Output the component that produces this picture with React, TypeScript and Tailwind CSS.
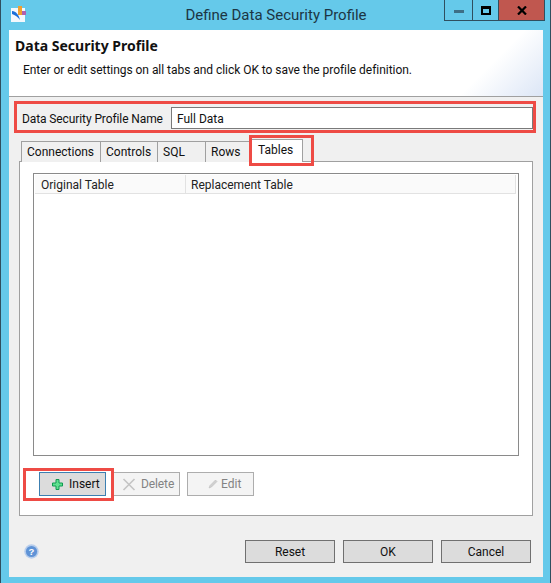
import React from "react";

function Tab({ label, w }: { label: string; w: string }) {
  return (
    <div className={`${w} justify-start pl-[5px] h-[21px] flex items-center bg-[#f0f0f0] border border-b-0 border-[#a0a0a0] text-[12px] text-[#111] -mr-px`}>
      {label}
    </div>
  );
}

function Btn({ label, w = "w-[90px]" }: { label: string; w?: string }) {
  return (
    <div className={`${w} h-[23px] flex items-center justify-center pt-[1px] bg-[#dcdcdc] border border-[#707070] text-[12px] text-[#111]`}>
      {label}
    </div>
  );
}

export default function App() {
  return (
    <div className="relative w-[551px] h-[583px] overflow-hidden bg-[#65c9ea] border-x border-[#2f4f5f] font-['Roboto','Noto_Sans',sans-serif] flex flex-col">
      {/* Title bar */}
      <div className="relative h-[30px] shrink-0 flex items-center justify-center">
        <svg className="absolute left-[10px] top-[6px]" width="16" height="16" viewBox="0 0 16 16">
          <rect x="0" y="2" width="14" height="14" fill="#f4f8fc" />
          <rect x="7" y="0" width="4" height="9" fill="#f0a030" />
          <rect x="11" y="5" width="4" height="4" fill="#b060b0" />
          <path d="M1 5 C5 5 8 9 9 14 C7 11 4 9 1 8 Z" fill="#1a6fd8" />
        </svg>
        <span className="text-[15px] text-[#1c3644] pl-[1px]">Define Data Security Profile</span>
        <div className="absolute right-[5px] top-0 h-[21px] flex border-x border-b border-[#2f4f5f]">
          <div className="w-[28px] flex items-center justify-center border-r border-[#2f4f5f]">
            <div className="w-[10px] h-[3px] bg-[#3d6f86] mt-[3px]" />
          </div>
          <div className="w-[26px] flex items-center justify-center border-r border-[#2f4f5f]">
            <div className="w-[10px] h-[9px] border-2 border-t-[3px] border-black" />
          </div>
          <div className="w-[45px] bg-[#c0574f] flex items-center justify-center">
            <svg width="10" height="9" viewBox="0 0 10 9">
              <path d="M1 0.5 L9 8.5 M9 0.5 L1 8.5" stroke="#000" strokeWidth="2.2" />
            </svg>
          </div>
        </div>
      </div>

      {/* Client area */}
      <div className="ml-[8px] mr-[7px] mb-[6px] flex-1 bg-[#f0f0f0] flex flex-col min-h-0">
        {/* Header */}
        <div className="h-[67px] shrink-0 border-b border-[#a0a0a0] bg-[linear-gradient(135deg,#ffffff_0%,#ffffff_86%,#dce6f6_100%)] pl-[6px] pt-[6px]">
          <div className="font-['Noto_Sans'] text-[14px] font-bold leading-[20px] text-[#111]">Data Security Profile</div>
          <div className="text-[12px] tracking-[-0.04px] leading-[16px] text-[#111] pl-[8px] mt-[6px]">
            Enter or edit settings on all tabs and click OK to save the profile definition.
          </div>
        </div>

        {/* Name row */}
        <div className="mt-[10px] ml-[13px] mr-[10px] h-[22px] flex items-center">
          <span className="w-[149px] shrink-0 whitespace-nowrap pt-[1px] text-[12px] tracking-[-0.1px] text-[#111]">Data Security Profile Name</span>
          <div className="flex-1 h-[22px] bg-white border border-[#7a7a7a] pl-[5px] pt-[1px] flex items-center text-[12px] text-[#111]">
            Full Data
          </div>
        </div>

        {/* Tabs */}
        <div className="mt-[10px] ml-[12px] mr-[10px] h-[23px] flex items-start relative z-10">
          <div className="mt-[2px] flex">
            <Tab label="Connections" w="w-[80px]" />
            <Tab label="Controls" w="w-[58px]" />
            <Tab label="SQL" w="w-[49px]" />
            <Tab label="Rows" w="w-[45px]" />
          </div>
          <div className="ml-[2px] w-[52px] h-[23px] bg-white border border-b-0 border-[#a0a0a0] text-[12px] text-[#111] flex items-center pl-[6px] pb-[3px]">
            Tables
          </div>
        </div>

        {/* Panel */}
        <div className="ml-[10px] mr-[10px] h-[355px] -mt-px bg-white border border-[#a0a0a0] pt-[11px] px-[13px] flex flex-col">
          <div className="h-[283px] border border-[#8a8a8a] bg-white pt-[1px] px-[1px]">
            <div className="h-[19px] mr-[1px] flex bg-[#fafafa] border-b border-[#e2e2e2] border-r text-[12px] text-[#222] leading-[20px]">
              <div className="w-[151px] pl-[6px] border-r border-[#e2e2e2]">Original Table</div>
              <div className="pl-[5px]">Replacement Table</div>
            </div>
          </div>
          <div className="mt-[16px] ml-[6px] flex">
            <div className="w-[67px] h-[24px] bg-[#dcdcdc] border border-[#3c7fb1] flex items-center pl-[12px] gap-[6px] text-[12px] text-[#111]">
              <svg width="11" height="11" viewBox="0 0 11 11">
                <path d="M4 0.5 H7 V4 H10.5 V7 H7 V10.5 H4 V7 H0.5 V4 H4 Z" fill="#5fe08f" stroke="#0f9a50" strokeWidth="1" />
              </svg>
              <span>Insert</span>
            </div>
            <div className="ml-[7px] w-[67px] h-[24px] bg-[#f4f4f4] border border-[#adadad] flex items-center pl-[8px] gap-[5px] text-[12px] tracking-[-0.1px] text-[#838383]">
              <svg width="14" height="13" viewBox="0 0 14 13">
                <path d="M1.5 1 L12.5 12 M12.5 1 L1.5 12" stroke="#c4c4c4" strokeWidth="1.6" />
              </svg>
              <span>Delete</span>
            </div>
            <div className="ml-[7px] w-[67px] h-[24px] bg-[#f4f4f4] border border-[#adadad] flex items-center pl-[20px] gap-[3px] text-[12px] text-[#838383]">
              <svg width="10" height="10" viewBox="0 0 10 10">
                <path d="M1 9 L2 6.5 L7.5 1 L9 2.5 L3.5 8 Z" fill="#d0d0d0" stroke="#bdbdbd" strokeWidth="0.6" />
              </svg>
              <span>Edit</span>
            </div>
          </div>
        </div>

        {/* Footer */}
        <div className="mt-[24px] ml-[15px] mr-[12px] flex items-center">
          <svg width="15" height="15" viewBox="0 0 15 15">
            <circle cx="7.5" cy="7.5" r="7.2" fill="#b7cdec" />
            <circle cx="7.5" cy="7.5" r="5.6" fill="#5f93d6" />
            <text x="7.5" y="10.8" textAnchor="middle" fontSize="9.5" fontWeight="700" fill="#ffffff" fontFamily="Liberation Sans">?</text>
          </svg>
          <div className="ml-auto flex gap-[8px]">
            <Btn label="Reset" />
            <Btn label="OK" />
            <Btn label="Cancel" />
          </div>
        </div>
      </div>

      {/* Red annotation frames */}
      <div className="absolute left-[13px] top-[101px] w-[522px] h-[32px] border-[3px] border-[#ee4b45]" />
      <div className="absolute left-[248px] top-[135px] w-[65px] h-[31px] border-[3px] border-[#ee4b45] z-20" />
      <div className="absolute left-[22px] top-[468px] w-[91px] h-[33px] border-[3px] border-[#ee4b45]" />
    </div>
  );
}
